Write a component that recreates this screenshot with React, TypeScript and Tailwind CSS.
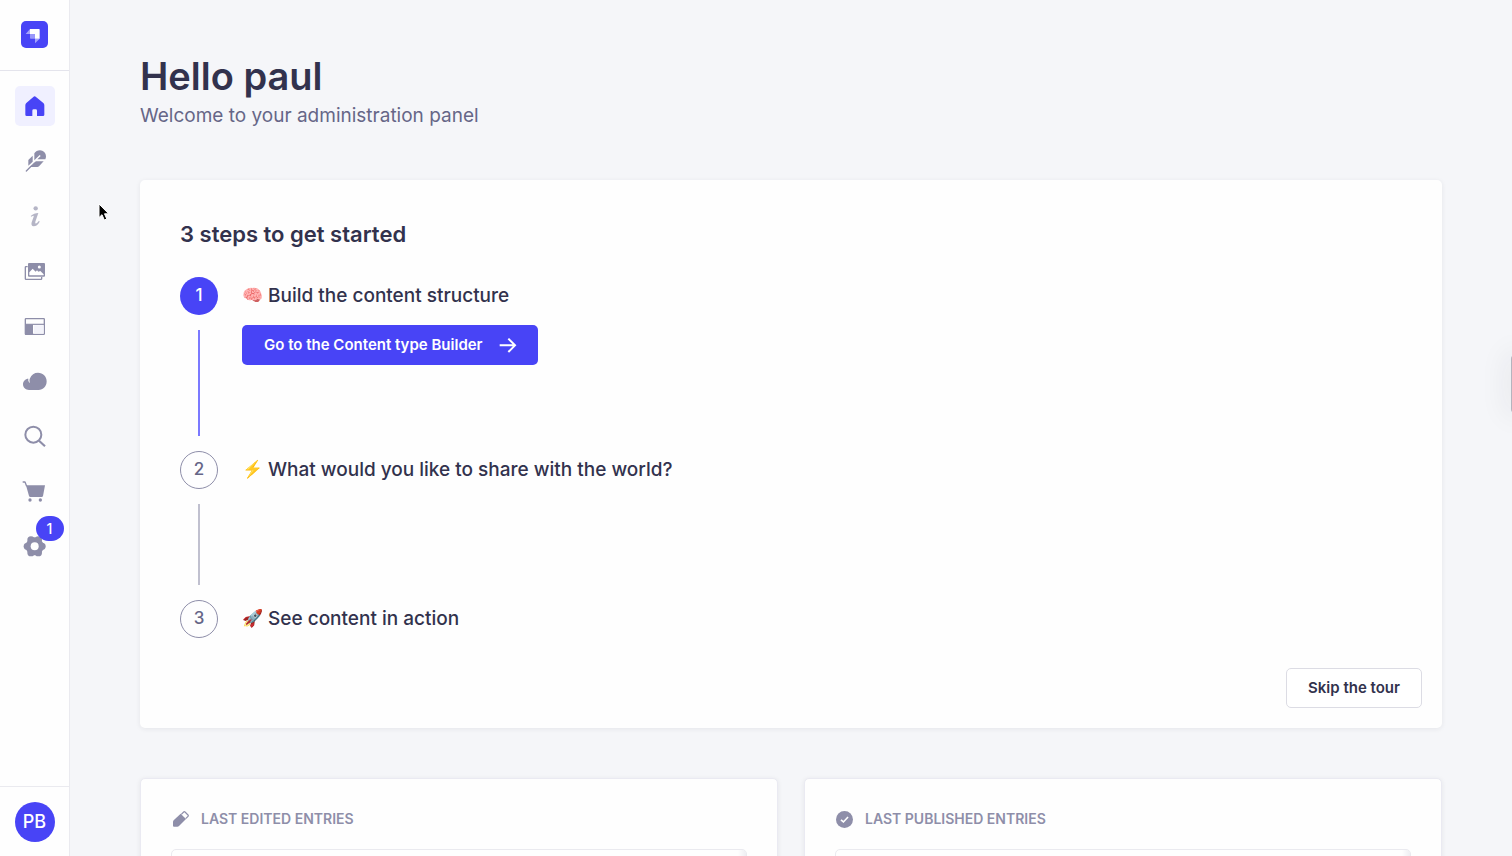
import React from "react";

function Glyph({ children, size = 24, box = 72 }: { children: React.ReactNode; size?: number; box?: number }) {
  return (
    <svg width={size} height={size} viewBox={`0 0 ${box} ${box}`} fill="none" overflow="visible" aria-hidden="true" className="shrink-0">
      {children}
    </svg>
  );
}

const Logo = () => (
  <svg width="27" height="27" viewBox="0 0 81 81" aria-hidden="true">
    <rect width="81" height="81" rx="15" fill="#4844f6" />
    <path d="M27 24H54Q56 24 56 26V53H42V39H27Z" fill="#fff" />
    <path d="M27 39H42V53H29Q27 53 27 51Z" fill="#fff" opacity=".45" />
    <path d="M27 24V39H14Z" fill="#fff" opacity=".5" />
    <path d="M42 53H56L42 67Z" fill="#fff" opacity=".5" />
  </svg>
);

const Home = () => (
  <Glyph>
    <path
      d="M31 9Q35 5 39 9L61 27Q64 30 64 34V62Q64 66 60 66H42V50Q42 46 38 46H32Q28 46 28 50V66H11Q7 66 7 62V34Q7 30 10 27Z"
      fill="#4844f6"
    />
  </Glyph>
);

const Feather = () => (
  <Glyph>
    <g fill="#8e8ea9">
      <path d="M34 13Q40 4 51 4A18 18 0 0 1 69 22Q69 27 67 31H43L53 21L50 18L34 34Z" />
      <path d="M16 33L29 20V38L16 50Z" />
      <path d="M38 37H62L48 52Q46 54 43 54H21Z" />
    </g>
    <path d="M10 66L34 42" stroke="#8e8ea9" strokeWidth="4" strokeLinecap="round" />
    <path d="M24 49L38 35" stroke="#fff" strokeWidth="2" />
  </Glyph>
);

const Info = () => (
  <Glyph>
    <g fill="#b5b5c6">
      <circle cx="38" cy="13" r="6.5" />
      <path d="M23 36C30 30 37 27 46 27L37 53C36 58 38 60 42 57L48 50L50 53C45 62 39 67 32 67C26 67 24 62 26 55L32 38C33 34 31 34 25 38Z" />
    </g>
  </Glyph>
);

const Pictures = () => (
  <Glyph>
    <path d="M14 23H9Q7 23 7 25V59Q7 61 9 61H54Q56 61 56 59V54" stroke="#8e8ea9" strokeWidth="4" />
    <rect x="15" y="12" width="51" height="41" rx="3" fill="#8e8ea9" />
    <path d="M19 49V40L29 29L38 38L42 34L46 38L52 36L62 46V49Z" fill="#fff" />
    <circle cx="49" cy="24" r="4.5" fill="#fff" />
  </Glyph>
);

const Layout = () => (
  <Glyph>
    <rect x="7" y="14" width="57" height="47" rx="2" stroke="#8e8ea9" strokeWidth="4" />
    <path d="M6 31H65" stroke="#8e8ea9" strokeWidth="3.5" />
    <path d="M6 31H30V62H6Z" fill="#8e8ea9" />
    <path d="M33 34H62V59H33Z" fill="#f3f3fa" />
  </Glyph>
);

const Cloud = () => (
  <Glyph>
    <path
      d="M18 63C8 63 0 56 0 46C0 37 7 29 16 29C15 35 17 39 21 42C19 36 19 32 21 28C25 17 34 11 45 11C60 11 71 22 71 37C71 53 60 63 47 63Z"
      fill="#8e8ea9"
    />
  </Glyph>
);

const Search = () => (
  <Glyph>
    <circle cx="31" cy="32" r="24" stroke="#8e8ea9" strokeWidth="6" />
    <path d="M48 50L66 67" stroke="#8e8ea9" strokeWidth="6.5" />
  </Glyph>
);

const Cart = () => (
  <Glyph>
    <path d="M-1 9H6L11 22" stroke="#8e8ea9" strokeWidth="4" strokeLinejoin="round" />
    <path d="M9 19H66L60 51Q59 54 56 54H22Q19 54 18 51Z" fill="#8e8ea9" />
    <circle cx="21" cy="63" r="5" fill="#8e8ea9" />
    <circle cx="52" cy="63" r="5" fill="#8e8ea9" />
  </Glyph>
);

const Cog = () => (
  <Glyph>
    <g fill="#8e8ea9">
      <circle cx="35" cy="37" r="27" />
      <circle cx="57" cy="37" r="11" />
      <circle cx="46" cy="56" r="11" />
      <circle cx="24" cy="56" r="11" />
      <circle cx="13" cy="37" r="11" />
      <circle cx="24" cy="18" r="11" />
      <circle cx="46" cy="18" r="11" />
    </g>
    <circle cx="35" cy="37" r="12" fill="#fff" />
  </Glyph>
);

const Pencil = () => (
  <Glyph size={16} box={48}>
    <path d="M2 28L23 8L39 24L18 45Q16 47 13 47H3Q0 47 0 44V33Q0 30 2 28Z" fill="#8e8ea9" />
    <path d="M25 10L32 3Q34 1 36 3L45 12Q47 14 45 16L38 23" stroke="#8e8ea9" strokeWidth="3.5" />
  </Glyph>
);

const CheckCircle = () => (
  <Glyph size={17} box={48}>
    <circle cx="24" cy="24" r="24" fill="#8e8ea9" />
    <path d="M14 25L21 31L34 17" stroke="#fff" strokeWidth="4.5" />
  </Glyph>
);

const ArrowRight = () => (
  <Glyph size={17} box={51}>
    <path d="M2 25H47M28 5L48 25L28 45" stroke="#fff" strokeWidth="6" />
  </Glyph>
);

const NAV: { label: string; Icon: React.FC; active?: boolean; badge?: number }[] = [
  { label: "Home", Icon: Home, active: true },
  { label: "Content Manager", Icon: Feather },
  { label: "Documentation", Icon: Info },
  { label: "Media Library", Icon: Pictures },
  { label: "Content-Type Builder", Icon: Layout },
  { label: "Deploy", Icon: Cloud },
  { label: "Search", Icon: Search },
  { label: "Marketplace", Icon: Cart },
  { label: "Settings", Icon: Cog, badge: 1 },
];

function Sidebar() {
  return (
    <aside className="flex w-[70px] shrink-0 flex-col border-r border-[#eaeaef] bg-[#fefefe]">
      <div className="flex h-[71px] shrink-0 items-start justify-center border-b border-[#e4e4ec] pt-[21px]">
        <a href="#home" aria-label="Dashboard">
          <Logo />
        </a>
      </div>
      <nav className="flex grow flex-col items-center gap-[15px] pt-[15px]">
        {NAV.map(({ label, Icon, active, badge }) => (
          <a
            key={label}
            href="#nav"
            aria-label={label}
            className={`relative flex size-10 items-center justify-center rounded-[5px] ${active ? "bg-[#f0f0ff]" : ""}`}
          >
            <Icon />
            {badge && (
              <span className="absolute -top-2.5 left-[21px] flex h-[25px] w-7 items-center justify-center rounded-full bg-[#4844f6] text-sm font-medium text-white">
                {badge}
              </span>
            )}
          </a>
        ))}
      </nav>
      <div className="flex h-[70px] shrink-0 items-center justify-center border-t border-[#eaeaef]">
        <button type="button" aria-label="Account" className="size-10 rounded-full bg-[#4844f6] text-lg font-medium text-white">
          PB
        </button>
      </div>
    </aside>
  );
}

type StepProps = {
  number: number;
  emoji: string;
  title: string;
  active?: boolean;
  line?: string;
  children?: React.ReactNode;
};

function Step({ number, emoji, title, active, line, children }: StepProps) {
  return (
    <li className="flex gap-6">
      <div className="flex w-[38px] shrink-0 flex-col items-center">
        <span
          className={`flex size-[38px] items-center justify-center rounded-full text-[17px] font-medium ${
            active ? "bg-[#4844f6] text-white" : "border border-[#8e8ea9] text-[#666687]"
          }`}
        >
          {number}
        </span>
        {line && <span className={`my-[15px] w-0.5 ${line}`} />}
      </div>
      <div>
        <h3 className="flex h-[38px] items-center gap-[5px] text-[19px] font-medium text-[#32324d]">
          <span className="w-[21px] text-[17px]">{emoji}</span>
          {title}
        </h3>
        {children}
      </div>
    </li>
  );
}

function EntriesCard({ title, icon }: { title: string; icon: React.ReactNode }) {
  return (
    <section className="min-w-0 flex-1 rounded-[5px] border border-[#eaeaf2] bg-[#fefefe] px-[30px] pt-[30px] pb-8 shadow-[0_1px_5px_rgba(33,33,52,0.08)]">
      <h2 className="flex h-5 items-center gap-3 px-px text-sm font-semibold text-[#8e8ea9] uppercase">
        <span className="flex w-[17px] justify-center">{icon}</span>
        {title}
      </h2>
      <div className="mt-5 flex h-40 justify-end overflow-hidden rounded-[5px] border border-[#eaeaef]">
        <span className="w-2 bg-linear-to-l from-[#eeeef2] to-transparent" />
      </div>
    </section>
  );
}

export default function App() {
  return (
    <div className="flex h-screen overflow-hidden bg-[#f5f6f9] font-['Inter','Liberation_Sans',sans-serif]">
      <Sidebar />
      <main className="min-w-0 grow overflow-y-auto px-[70px] pb-12 [scrollbar-width:none]">
        <header className="pt-[51px] pb-[49px]">
          <h1 className="text-[38px] leading-[50px] font-semibold text-[#32324d]">Hello paul</h1>
          <p className="text-[19px] leading-[30px] text-[#666687]">Welcome to your administration panel</p>
        </header>

        <section className="rounded-[5px] bg-[#fefefe] pt-10 pr-5 pb-5 pl-10 shadow-[0_1px_5px_rgba(33,33,52,0.08)]">
          <h2 className="text-[22px] leading-7 font-semibold text-[#32324d]">3 steps to get started</h2>
          <ol className="mt-[29px]">
            <Step number={1} emoji="🧠" title="Build the content structure" active line="h-[106px] bg-[#7b79ff]">
              <button
                type="button"
                className="mt-2.5 flex h-10 items-center gap-4 rounded-[5px] bg-[#4844f6] px-[22px] text-[15px] font-semibold text-white"
              >
                Go to the Content type Builder
                <ArrowRight />
              </button>
            </Step>
            <Step number={2} emoji="⚡️" title="What would you like to share with the world?" line="h-[81px] bg-[#c0c0cf]" />
            <Step number={3} emoji="🚀" title="See content in action" />
          </ol>
          <div className="mt-[30px] flex justify-end">
            <button
              type="button"
              className="h-10 rounded-[5px] border border-[#dcdce4] bg-white px-[21px] text-[15px] font-semibold text-[#32324d]"
            >
              Skip the tour
            </button>
          </div>
        </section>

        <div className="mt-[50px] flex gap-[26px]">
          <EntriesCard title="Last edited entries" icon={<Pencil />} />
          <EntriesCard title="Last published entries" icon={<CheckCircle />} />
        </div>
      </main>

      <svg className="pointer-events-none fixed top-[203px] left-[98px]" width="12" height="19" viewBox="0 0 12 19" aria-hidden="true">
        <path d="M1 1V14.500L4 11.700L6.300 17L8.800 16L6.500 10.800H10.700Z" fill="#000" stroke="#fff" strokeWidth="1" />
      </svg>
      <span className="pointer-events-none fixed top-[355px] -right-2 h-[58px] w-[9px] rounded-l bg-[#b4b4be] shadow-[0_0_28px_4px_rgba(33,33,52,0.08)]" />
    </div>
  );
}
